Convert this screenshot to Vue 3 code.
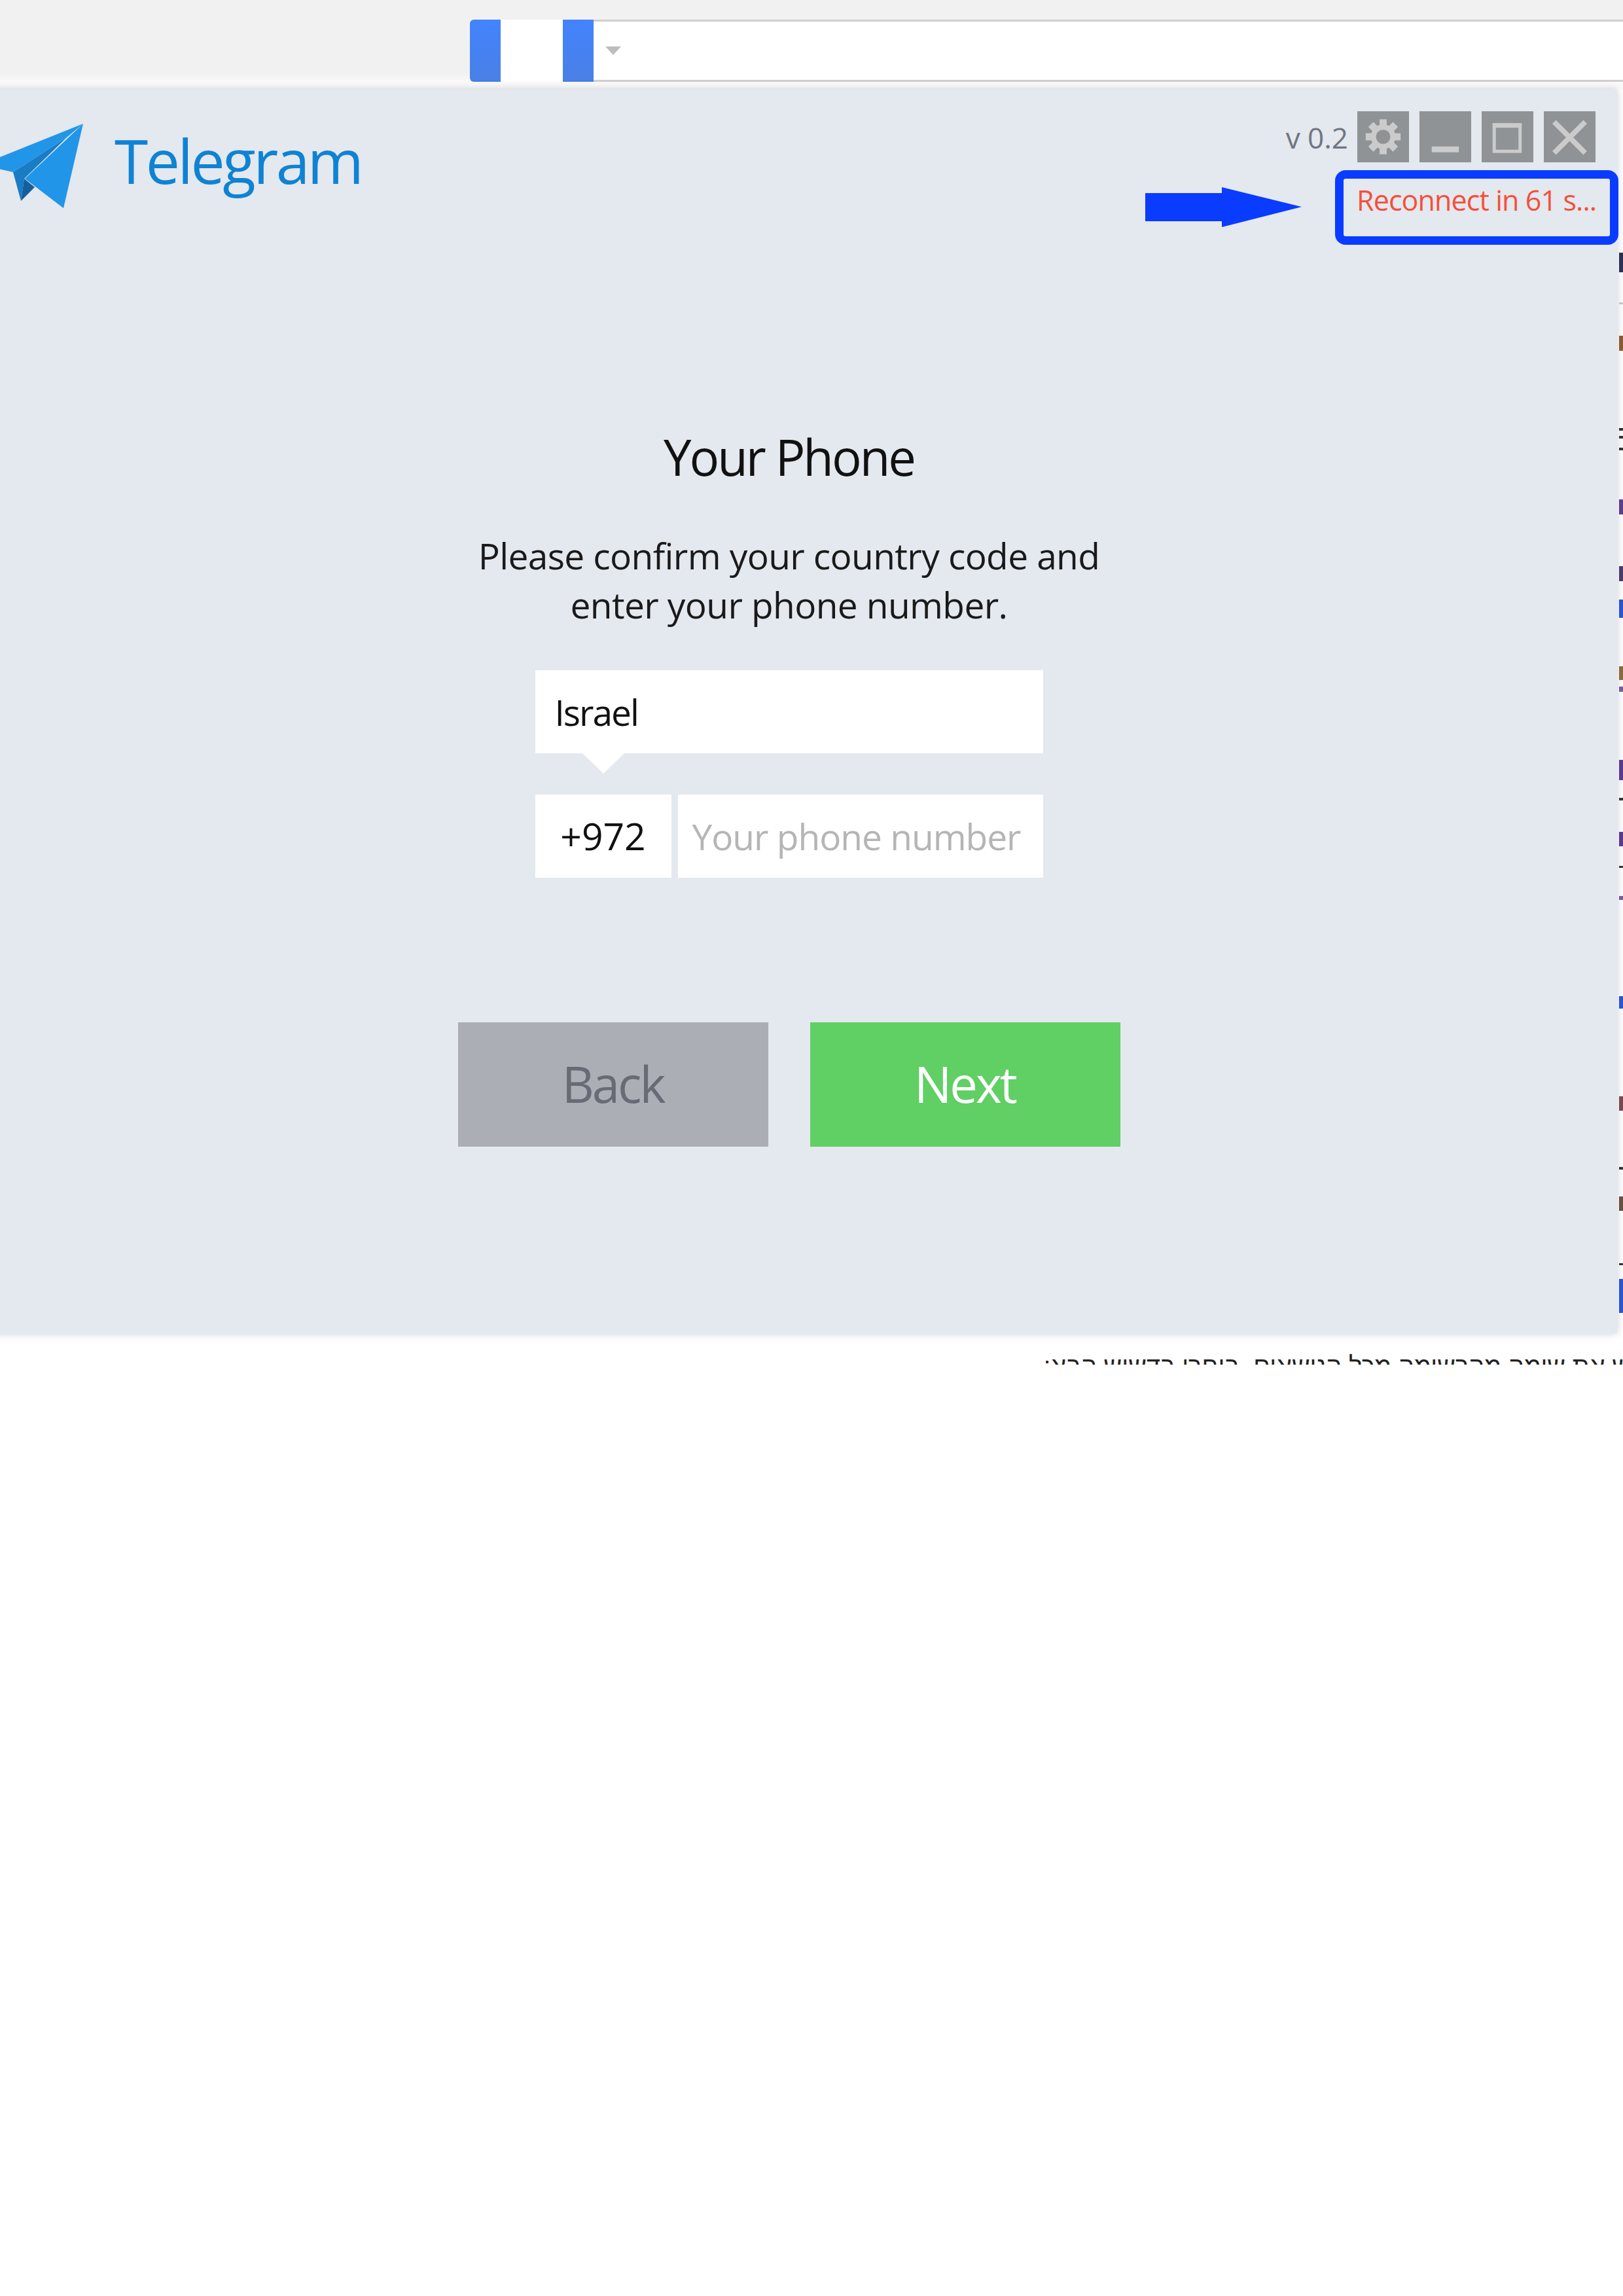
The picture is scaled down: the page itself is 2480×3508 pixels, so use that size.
<script setup>
// bits of the page text that stick out to the right of the login window
const slivers = [
  { top: 386, height: 30, color: '#2b3350' },
  { top: 462, height: 3, color: '#c4c4c4' },
  { top: 513, height: 23, color: '#8a5a30' },
  { top: 654, height: 4, color: '#333' },
  { top: 666, height: 4, color: '#333' },
  { top: 684, height: 4, color: '#333' },
  { top: 763, height: 23, color: '#5a3f8c' },
  { top: 865, height: 23, color: '#4a3a70' },
  { top: 916, height: 28, color: '#2a55d0' },
  { top: 1018, height: 21, color: '#8a6a40' },
  { top: 1049, height: 8, color: '#7a5aa0' },
  { top: 1161, height: 31, color: '#5a3a90' },
  { top: 1219, height: 4, color: '#333' },
  { top: 1271, height: 22, color: '#5a3a90' },
  { top: 1323, height: 3, color: '#333' },
  { top: 1369, height: 6, color: '#7a5aa0' },
  { top: 1522, height: 19, color: '#2a55d0' },
  { top: 1675, height: 22, color: '#7a4a50' },
  { top: 1783, height: 4, color: '#333' },
  { top: 1828, height: 22, color: '#6a5040' },
  { top: 1930, height: 3, color: '#333' },
  { top: 1954, height: 52, color: '#2a55d0' }
]

const teeth = [0, 45, 90, 135]
</script>

<template>
  <div class="page">
    <div class="toolbar">
      <div class="tabs">
        <span class="tab-blue first"></span>
        <span class="tab-white"></span>
        <span class="tab-blue"></span>
      </div>
      <div class="address">
        <span class="caret-down"></span>
      </div>
    </div>

    <div class="window">
      <div class="header">
        <div class="brand">
          <svg class="logo" viewBox="-20 185 150 135" width="150" height="135">
            <polygon points="127,189 -20,248 -20,254 20,263 102,210" fill="#2196e8" />
            <polygon points="102,210 20,263 32,307 37,273" fill="#1a7cc4" />
            <polygon points="37,273 53,286 32,307" fill="#145f9c" />
            <polygon points="127,189 38,273 97,318" fill="#2196e8" />
          </svg>
          <span class="brand-name">Telegram</span>
        </div>
        <div class="controls">
          <span class="version">v 0.2</span>
          <span class="ctrl">
            <svg viewBox="0 0 80 78" width="79" height="78">
              <g fill="#cbcbcb">
                <rect v-for="a in teeth" :key="a" x="34.5" y="12" width="11" height="54" :transform="`rotate(${a} 40 39)`" />
              </g>
              <circle cx="40" cy="39" r="15" fill="#909396" stroke="#cbcbcb" stroke-width="8" />
            </svg>
          </span>
          <span class="ctrl">
            <svg viewBox="0 0 80 78" width="79" height="78">
              <rect x="19" y="54" width="42" height="9" fill="#cbcbcb" />
            </svg>
          </span>
          <span class="ctrl">
            <svg viewBox="0 0 80 78" width="79" height="78">
              <rect x="19.5" y="20.5" width="40" height="41" fill="none" stroke="#cbcbcb" stroke-width="5" />
              <rect x="17" y="18" width="45" height="7" fill="#cbcbcb" />
            </svg>
          </span>
          <span class="ctrl">
            <svg viewBox="0 0 80 78" width="79" height="78">
              <path d="M16 16 L64 64 M64 16 L16 64" fill="none" stroke="#cbcbcb" stroke-width="8" />
            </svg>
          </span>
        </div>
      </div>

      <div class="content">
        <h1 class="title">Your Phone</h1>
        <p class="desc">Please confirm your country code and<br />enter your phone number.</p>
        <div class="form">
          <div class="country">Israel</div>
          <div class="phone-row">
            <div class="code">+972</div>
            <div class="number">Your phone number</div>
          </div>
        </div>
        <div class="buttons">
          <div class="btn back">Back</div>
          <div class="btn next">Next</div>
        </div>
      </div>
    </div>

    <div class="behind" dir="rtl">
      <span>ש את שימה מהרשימה מכל הנושאים. בוחרו בדשיש הבא:</span>
    </div>

    <!-- annotation drawn over the screenshot -->
    <svg class="arrow" viewBox="0 0 240 62" width="240" height="62">
      <polygon points="0,9 117,9 117,0 239,30 117,61 117,52 0,52" fill="#0a3cff" />
    </svg>
    <div class="reconnect">Reconnect in 61 s...</div>

    <div class="strip">
      <i
        v-for="s in slivers"
        :key="s.top"
        :style="{ top: s.top + 'px', height: s.height + 'px', background: s.color }"
      ></i>
    </div>
  </div>
</template>

<style scoped>
.page {
  position: relative;
  width: 2480px;
  height: 3508px;
  overflow: hidden;
  background: #fff;
  font-family: "Open Sans", "Noto Sans", sans-serif;
}

.toolbar {
  height: 137px;
  padding: 30px 0 12px 718px;
  box-sizing: border-box;
  display: flex;
  background: linear-gradient(#f1f1f1 0, #f1f1f1 112px, #fafafa 125px);
}

.tabs {
  display: flex;
  height: 95px;
}

.tab-blue {
  width: 47px;
  background: linear-gradient(#4283fd, #4a80e6);
}

.tab-blue.first {
  border-radius: 6px 0 0 6px;
}

.tab-white {
  width: 95px;
  background: #fff;
}

.address {
  flex: 1;
  height: 95px;
  box-sizing: border-box;
  background: #fff;
  border-top: 3px solid #cfcfcf;
  border-bottom: 3px solid #cfcfcf;
  display: flex;
  align-items: center;
  padding-left: 18px;
}

.caret-down {
  width: 0;
  height: 0;
  border-left: 12px solid transparent;
  border-right: 12px solid transparent;
  border-top: 13px solid #bdbdbd;
}

.window {
  width: 2531px;
  height: 1900px;
  margin-left: -60px;
  background: #e4e8ef;
  box-shadow: 0 0 12px rgba(120, 130, 150, 0.4);
  position: relative;
}

.header {
  height: 137px;
  display: flex;
  justify-content: space-between;
  align-items: flex-start;
  padding: 33px 33px 0 40px;
  box-sizing: border-box;
}

.brand {
  display: flex;
  align-items: flex-start;
}

.logo {
  margin-top: 15px;
  flex-shrink: 0;
}

.brand-name {
  margin: 15px 0 0 45px;
  font-size: 93px;
  letter-spacing: -3.5px;
  line-height: 120px;
  color: #0f83d3;
}

.controls {
  display: flex;
  align-items: flex-start;
  gap: 16px;
}

.version {
  font-size: 44px;
  line-height: 60px;
  margin: 10px -2px 0 0;
  color: #6f7680;
}

.ctrl {
  width: 79px;
  height: 78px;
  background: #909396;
  display: block;
}

.ctrl svg {
  display: block;
}

.content {
  display: flex;
  flex-direction: column;
  align-items: center;
}

.title {
  margin: 374px 0 0;
  font-size: 76px;
  letter-spacing: -3px;
  font-weight: 400;
  line-height: 100px;
  color: #111;
}

.desc {
  margin: 63px 0 0;
  font-size: 55px;
  letter-spacing: -0.6px;
  line-height: 75px;
  text-align: center;
  color: #1a1a1a;
}

.form {
  width: 776px;
  margin-top: 63px;
}

.country {
  position: relative;
  height: 127px;
  padding-left: 30px;
  background: #fff;
  font-size: 55px;
  letter-spacing: -2px;
  line-height: 127px;
  color: #111;
}

/* small pointer under the country box */
.country::after {
  content: "";
  position: absolute;
  left: 72px;
  top: 127px;
  border-left: 32px solid transparent;
  border-right: 32px solid transparent;
  border-top: 31px solid #fff;
}

.phone-row {
  display: flex;
  gap: 10px;
  margin-top: 63px;
}

.code,
.number {
  height: 127px;
  background: #fff;
  font-size: 55px;
  line-height: 127px;
}

.code {
  width: 208px;
  font-size: 57px;
  text-align: center;
  color: #111;
}

.number {
  flex: 1;
  padding-left: 22px;
  letter-spacing: -1px;
  color: #b5b5b5;
  white-space: nowrap;
  overflow: hidden;
}

.buttons {
  display: flex;
  gap: 64px;
  margin-top: 221px;
}

.btn {
  width: 474px;
  height: 190px;
  font-size: 76px;
  letter-spacing: -3px;
  line-height: 188px;
  text-align: center;
}

.back {
  background: #abaeb5;
  color: #666b75;
}

.next {
  background: #60cf64;
  color: #fff;
}

.behind {
  display: flex;
  justify-content: flex-start;
  margin: 28px 0 0 1591px;
  width: 900px;
  height: 20px;
  overflow: hidden;
  font-family: "Liberation Sans", sans-serif;
  font-size: 38px;
  line-height: 45px;
  white-space: nowrap;
  color: #222;
}

.arrow {
  position: absolute;
  left: 1750px;
  top: 286px;
}

.reconnect {
  position: absolute;
  left: 2040px;
  top: 260px;
  width: 433px;
  height: 114px;
  box-sizing: border-box;
  border: 13px solid #0a3cff;
  border-radius: 16px;
  padding-left: 20px;
  font-size: 43px;
  letter-spacing: -0.9px;
  line-height: 65px;
  white-space: nowrap;
  color: #f4503a;
}

.strip {
  position: absolute;
  left: 2474px;
  top: 0;
  width: 6px;
  height: 2040px;
}

.strip i {
  position: absolute;
  left: 0;
  width: 6px;
}
</style>
